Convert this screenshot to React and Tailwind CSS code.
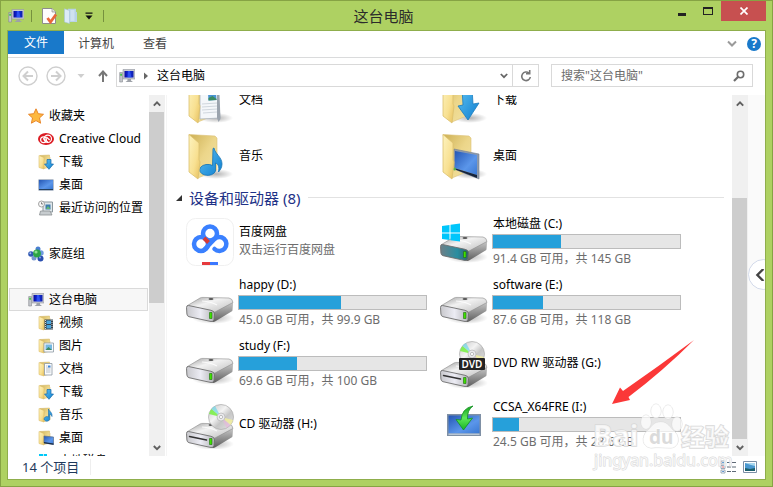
import React from 'react';

const quickLinks = [
  { label: '收藏夹', icon: 'star', level: 0 },
  { label: 'Creative Cloud', icon: 'cloud', level: 1 },
  { label: '下载', icon: 'download', level: 1 },
  { label: '桌面', icon: 'desktop', level: 1 },
  { label: '最近访问的位置', icon: 'recent', level: 1 },
];

const pcLinks = [
  { label: '这台电脑', icon: 'pc', level: 0, selected: true },
  { label: '视频', icon: 'video', level: 1 },
  { label: '图片', icon: 'picture', level: 1 },
  { label: '文档', icon: 'document', level: 1 },
  { label: '下载', icon: 'download', level: 1 },
  { label: '音乐', icon: 'music', level: 1 },
  { label: '桌面', icon: 'desktopFolder', level: 1 },
  { label: '本地磁盘 (C:)', icon: 'windows', level: 1 },
];

const folders = [
  { name: '文档', kind: 'document' },
  { name: '下载', kind: 'download' },
  { name: '音乐', kind: 'music' },
  { name: '桌面', kind: 'desktop' },
];

const devices = [
  { name: '百度网盘', icon: 'baidu', note: '双击运行百度网盘' },
  { name: '本地磁盘 (C:)', icon: 'system', used: 36.5, note: '91.4 GB 可用，共 145 GB' },
  { name: 'happy (D:)', icon: 'drive', used: 54.5, note: '45.0 GB 可用，共 99.9 GB' },
  { name: 'software (E:)', icon: 'drive', used: 26.5, note: '87.6 GB 可用，共 118 GB' },
  { name: 'study (F:)', icon: 'drive', used: 31, note: '69.6 GB 可用，共 100 GB' },
  { name: 'DVD RW 驱动器 (G:)', icon: 'dvd' },
  { name: 'CD 驱动器 (H:)', icon: 'cd' },
  { name: 'CCSA_X64FRE (I:)', icon: 'image', used: 14, note: '24.5 GB 可用，共 28.6 GB' },
];

// Gradients shared by all the icons
function Gradients() {
  return (
    <svg className="absolute h-0 w-0" aria-hidden="true">
      <defs>
        <linearGradient id="flap" x1="0" y1="0" x2="1" y2="1">
          <stop offset="0" stopColor="#fdf3bf" />
          <stop offset="0.6" stopColor="#f8e091" />
          <stop offset="1" stopColor="#e6bf5c" />
        </linearGradient>
        <linearGradient id="folderBack" x1="0" y1="0" x2="1" y2="1">
          <stop offset="0" stopColor="#cdb054" />
          <stop offset="0.5" stopColor="#ecd68a" />
          <stop offset="1" stopColor="#f3e3a4" />
        </linearGradient>
        <linearGradient id="blue" x1="0" y1="0" x2="1" y2="1">
          <stop offset="0" stopColor="#5cc0f2" />
          <stop offset="1" stopColor="#0f7fd0" />
        </linearGradient>
        <linearGradient id="screen" x1="0" y1="0" x2="1" y2="1">
          <stop offset="0" stopColor="#2557b4" />
          <stop offset="0.6" stopColor="#5b96ea" />
          <stop offset="1" stopColor="#3a78d2" />
        </linearGradient>
        <linearGradient id="monitor" x1="0" y1="0" x2="1" y2="0">
          <stop offset="0" stopColor="#0a0a9c" />
          <stop offset="0.5" stopColor="#1233e6" />
          <stop offset="1" stopColor="#0f1ea8" />
        </linearGradient>
        <linearGradient id="driveTop" x1="0" y1="0" x2="1" y2="1">
          <stop offset="0" stopColor="#9b9b9b" />
          <stop offset="0.4" stopColor="#f2f2f2" />
          <stop offset="1" stopColor="#bdbdbd" />
        </linearGradient>
        <linearGradient id="driveSide" x1="0" y1="0" x2="0" y2="1">
          <stop offset="0" stopColor="#c9c9c9" />
          <stop offset="1" stopColor="#5d5d5d" />
        </linearGradient>
        <linearGradient id="driveFront" x1="0" y1="0" x2="1" y2="0">
          <stop offset="0" stopColor="#c8c8cc" />
          <stop offset="0.5" stopColor="#ececf4" />
          <stop offset="1" stopColor="#b4b4b8" />
        </linearGradient>
        <linearGradient id="teal" x1="0" y1="0" x2="1" y2="0">
          <stop offset="0" stopColor="#6d8088" />
          <stop offset="0.6" stopColor="#2a8ea0" />
          <stop offset="1" stopColor="#34606e" />
        </linearGradient>
        <linearGradient id="disc" x1="0" y1="0" x2="1" y2="1">
          <stop offset="0" stopColor="#c4c4c4" />
          <stop offset="0.4" stopColor="#f3f3f3" />
          <stop offset="0.6" stopColor="#c6c6c6" />
          <stop offset="1" stopColor="#e6e6e6" />
        </linearGradient>
        <linearGradient id="green" x1="0" y1="0" x2="0" y2="1">
          <stop offset="0" stopColor="#14a01c" />
          <stop offset="0.5" stopColor="#5ee85a" />
          <stop offset="1" stopColor="#17b424" />
        </linearGradient>
        <radialGradient id="shadow">
          <stop offset="0" stopColor="#000" stopOpacity="0.3" />
          <stop offset="1" stopColor="#000" stopOpacity="0" />
        </radialGradient>
      </defs>
    </svg>
  );
}

function SmallFolder({ children }) {
  return (
    <>
      <path d="M2 1.5 11.500 1v2l.5.5V13l-6 1.500z" fill="url(#folderBack)" stroke="#d3b561" strokeWidth=".5" />
      <path d="M1 1.500 6 3.500v11.500L1 13.500z" fill="url(#flap)" stroke="#dcbc66" strokeWidth=".6" />
      {children}
    </>
  );
}

const smallIcons = {
  star: (
    <path
      d="m8 .8 2.200 4.900 5.300.6-4 3.600 1.100 5.300L8 12.600l-4.600 2.600 1.100-5.300-4-3.600 5.300-.6z"
      fill="#fdb940"
      stroke="#e8862a"
      strokeWidth="1"
      strokeLinejoin="round"
    />
  ),
  cloud: (
    <>
      <ellipse cx="8" cy="8" rx="8" ry="6" fill="#dc1c24" />
      <g fill="none" stroke="#fff" strokeWidth="1.200">
        <circle cx="5.500" cy="8.800" r="2.900" />
        <circle cx="9.800" cy="7.800" r="3.700" />
        <path d="m5 7.600 2.400 1.500L9.800 11M8.300 6l3.400 3" />
      </g>
    </>
  ),
  download: (
    <SmallFolder>
      <path d="M9 5.500h4V10h2.500L11 15.300 6.500 10H9z" fill="url(#blue)" stroke="#1769a8" strokeWidth=".7" />
    </SmallFolder>
  ),
  desktop: (
    <>
      <rect x=".5" y="2.500" width="15" height="11" fill="#6b7f99" />
      <rect x="1" y="3" width="14" height="9" fill="url(#screen)" />
      <path d="M1 12h14v1H1z" fill="#24405f" />
    </>
  ),
  recent: (
    <>
      <path d="M5 2h9.500v10H5z" fill="#dfe6ea" stroke="#8b979d" />
      <path d="M7.500 4.500h5v5h-5z" fill="#3c7cae" />
      <path d="m8 9 2-3 2.500 3z" fill="#64b871" />
      <path d="M2.500 11H12l2 4H1.500z" fill="#c7cccf" stroke="#8a8f92" strokeWidth=".8" />
      <circle cx="3.500" cy="4" r="3" fill="#f6f6f6" stroke="#9a9a9a" strokeWidth=".9" />
      <path d="M3.500 2.300V4H5" fill="none" stroke="#555" strokeWidth=".7" />
    </>
  ),
  homegroup: (
    <>
      <circle cx="10" cy="3" r="2.500" fill="#4a7fd2" />
      <circle cx="3" cy="8" r="2.800" fill="#3158b2" />
      <circle cx="13" cy="7" r="2.700" fill="#6f9be0" />
      <circle cx="12.500" cy="12.500" r="3" fill="#2a4fb0" />
      <circle cx="6" cy="12" r="2.500" fill="#7796cf" />
      <circle cx="9" cy="7.500" r="3.900" fill="#2da544" />
      <circle cx="8" cy="6" r="1.600" fill="#8fe08f" />
      <circle cx="2.300" cy="7.200" r="1" fill="#9db9ec" />
      <circle cx="12" cy="11.500" r="1" fill="#86a4e6" />
    </>
  ),
  pc: (
    <>
      <path d="M4 1.500h12v9.500H4z" fill="#c9ccd2" stroke="#9296a0" strokeWidth=".6" />
      <path d="M5.500 3h9v6.500h-9z" fill="url(#monitor)" />
      <path d="m9 3-.5 6.500h4L11 3z" fill="#3f66ff" opacity=".6" />
      <path d="M8.500 11h3.500v1.500l2 1.500H6.500l2-1.500z" fill="#9da1a8" />
      <path d="M.7 4.500h2.800V14H.7z" fill="#c3c6ca" stroke="#868a91" strokeWidth=".6" />
      <path d="M1.300 5.800h1.600v2H1.300z" fill="#37c637" />
    </>
  ),
  video: (
    <SmallFolder>
      <path d="M6.500 4.500H15v10H6.500z" fill="#35424d" />
      <path d="M8.500 5.500h4.500v3.500H8.500zM8.500 10h4.500v3.500H8.500z" fill="#4aa6de" />
      <path d="M7.500 5v9M14 5v9" stroke="#dfe6ea" strokeDasharray="1 1" strokeWidth=".9" />
    </SmallFolder>
  ),
  picture: (
    <SmallFolder>
      <path d="M6 5h9.500v9H6z" fill="#f8fafb" stroke="#8e9ba5" strokeWidth=".8" />
      <path d="M7.500 6.500H14v5.500H7.500z" fill="#74b8e2" />
      <path d="m7.500 12 3-3 3.500 3z" fill="#3e8b63" />
    </SmallFolder>
  ),
  document: (
    <SmallFolder>
      <path d="M6.500 2.500H14V14H6.500z" fill="#fafcfd" stroke="#8e98a2" strokeWidth=".8" />
      <path d="M8 5h1.500M8 7h4.500M8 9h4.500M8 11h4.500" stroke="#a6b0bb" strokeWidth=".8" />
      <path d="M10 4.500h2.500v2H10z" fill="#3f86d8" />
    </SmallFolder>
  ),
  music: (
    <SmallFolder>
      <path
        d="M10.500 2c.5 2.500 4 3 3.500 7.500-.5-1.500-1.500-2-2.300-2.200v4.500a2.800 2.300 0 1 1-1.200-1.800z"
        fill="url(#blue)"
        stroke="#1769a8"
        strokeWidth=".6"
      />
    </SmallFolder>
  ),
  desktopFolder: (
    <SmallFolder>
      <path d="m6 6 9.500 1v7.500L6 13z" fill="url(#screen)" stroke="#5b6f89" strokeWidth=".7" />
      <path d="m6 12 9.500 1.500v1.300L6 13.300z" fill="#1c2c44" />
    </SmallFolder>
  ),
  windows: <path d="M1 1h4v4H1zM5.700 1H9v4H5.700z" fill="#00c8f8" />,
};

function SmallIcon({ name }) {
  return (
    <svg viewBox="0 0 16 16" className="h-4 w-4 shrink-0" aria-hidden="true">
      {smallIcons[name]}
    </svg>
  );
}

const folderContents = {
  document: (
    <>
      <path d="m14 8 17-4 3 38-20 1z" fill="#f4f7fa" stroke="#aab3bd" strokeWidth=".8" />
      <path d="m22 17 8-1 .5 8-8 .5z" fill="#4a94d2" />
      <path d="m22.500 22 4-2 4 3v1l-8 .5z" fill="#3c8c62" />
      <path d="m16 28 15-1M16 31l15-1M16 34l15-1M17 37l14-1" stroke="#d0d7de" strokeWidth="1" />
      <path d="m31 4 2 3 1.500 36-2 3-1.500-4z" fill="#9ba4ae" />
    </>
  ),
  download: (
    <path d="M22 12h10l1 16 6-1-11 17-10-14 5-1z" fill="url(#blue)" stroke="#1c7cbd" strokeWidth=".8" />
  ),
  music: (
    <path
      d="M28 16c1 6 8 9 8 16 0 4-2 6-3.500 8 1-6-.5-8-3-9v8a8 5.500 0 1 1-3-5.500l.5-17z"
      fill="url(#blue)"
      stroke="#1673b3"
      strokeWidth=".8"
    />
  ),
  desktop: (
    <>
      <path d="m14 17 25 5v25l-25-10z" fill="#8d9aab" stroke="#75808e" strokeWidth=".6" />
      <path d="m15 19 22 4v20l-22-7z" fill="url(#screen)" />
      <path d="m14 36 23 7v3l-23-9z" fill="#15243c" />
      <circle cx="14.500" cy="37" r="1.500" fill="#58b44c" />
    </>
  ),
};

function FolderIcon({ kind }) {
  return (
    <svg viewBox="0 0 48 48" className="h-12 w-12 shrink-0" aria-hidden="true">
      <ellipse cx="30" cy="42" rx="17" ry="5" fill="url(#shadow)" />
      <path d="M3 2.500 29 4l2 2v32l-19 8z" fill="url(#folderBack)" stroke="#dbc177" strokeWidth=".6" />
      {folderContents[kind]}
      <path d="M3 2.500 13 11v17l1 2-2 17-9-7z" fill="url(#flap)" stroke="#dcc06e" strokeWidth=".8" />
    </svg>
  );
}

function DriveBody({ front = 'url(#driveFront)', slot }) {
  return (
    <>
      <ellipse cx="27" cy="39" rx="21" ry="6" fill="url(#shadow)" />
      <path d="M28 31.500 46 23q1.500 0 1 2l-.5 6q0 1-1 1.500L29 42.500q-2 1-3-.5z" fill="url(#driveSide)" />
      <path
        d="M1.500 26.500 14 19q1-.7 3-.6l26 .6q3.500.6 4 4.500L29 33q-1 .5-2.500.3L3 28.500z"
        fill="url(#driveTop)"
        stroke="#8c8c8c"
        strokeWidth=".6"
      />
      <path
        d="M2.500 26.500 25 31.300q3.500.7 3.500 3.500l-.5 5.700q-.4 2.500-3 2L3 37.700Q1 37 .9 35l-.4-6.500q0-2.300 2-2z"
        fill={front}
        stroke="#6e6e6e"
        strokeWidth=".9"
      />
      {slot && <path d="m3.500 31.500 17 3.600" stroke="#333" strokeWidth="1.500" strokeLinecap="round" />}
      <path d="M16 22q9 .5 15 4" fill="none" stroke="#fff" strokeWidth="1.200" opacity=".8" />
      <ellipse cx="25" cy="20" rx="2.500" ry="1" fill="#555" />
      <path d="M23.500 33.500h2.500v6h-2.500z" fill="#3fe000" stroke="#1e6b10" strokeWidth=".6" />
    </>
  );
}

function Disc({ cx, cy }) {
  return (
    <g transform={`translate(${cx} ${cy})`}>
      <circle r="12.500" fill="url(#disc)" stroke="#a9a9a9" strokeWidth=".7" />
      <path d="m0 0-12-3q.8-3 2.500-5z" fill="#7cf04a" opacity=".9" />
      <path d="m0 0-9.500-8q1.500-2 3.500-3z" fill="#71d9e8" opacity=".7" />
      <path d="m0 0 12 3q-.8 3-2.500 5z" fill="#f3f09a" opacity=".8" />
      <path d="m0 0 9.500 8q-2 2-4 3z" fill="#e8b4dc" opacity=".6" />
      <circle r="4" fill="#e9e9ec" stroke="#b5b5b5" strokeWidth=".7" />
      <circle r="1.600" fill="#fff" stroke="#999" strokeWidth=".6" />
    </g>
  );
}

const deviceIcons = {
  drive: <DriveBody />,
  system: (
    <>
      <DriveBody front="url(#teal)" />
      <path d="m2 8 7.500-1v7.500H2zM10.500 6.800 20 5.500v9h-9.500zM2 15.500h7.500V22L2 21zM10.500 15.500H20v8l-9.500-1.300z" fill="#00c6fb" />
    </>
  ),
  cd: (
    <>
      <g transform="translate(0 4)">
        <DriveBody slot />
      </g>
      <Disc cx={35} cy={16} />
    </>
  ),
  dvd: (
    <>
      <g transform="translate(0 4)">
        <DriveBody slot />
      </g>
      <Disc cx={32} cy={14} />
      <rect x="19" y="18" width="26" height="12" rx="1" fill="#232323" />
      <text x="32" y="27.500" textAnchor="middle" fontSize="10" fontWeight="600" fill="#fff">
        DVD
      </text>
    </>
  ),
  image: (
    <>
      <path d="M7 13h34v22H7z" fill="#7f90a5" />
      <path d="M8.500 14.500h31v18h-31z" fill="url(#screen)" />
      <path d="M8.500 32.500h31V34h-31z" fill="#b9c6d4" />
      <path
        d="M33 5q-6 4-5.500 13l5-1L23.500 29 16 18.500l5 .5Q22 7 33 5z"
        fill="url(#green)"
        stroke="#129022"
        strokeWidth=".8"
        strokeLinejoin="round"
      />
    </>
  ),
  baidu: (
    <>
      <rect x=".5" y=".5" width="47" height="47" rx="9" fill="#fff" stroke="#f0f0f0" />
      <g fill="none" stroke="#3a80ff" strokeWidth="4.500">
        <circle cx="24" cy="15.500" r="7" />
        <circle cx="15" cy="26" r="7" />
        <path d="M18.500 31.500 28 21.500a7 7 0 1 1 .5 9.500" strokeLinecap="round" />
      </g>
      <path d="m18 20 4.500 4.500" stroke="#d83a34" strokeWidth="4" />
      <path d="M16 44h8v3h-8z" fill="#e6393d" />
      <path d="M24 44h8v3h-8z" fill="#3b78ff" />
    </>
  ),
};

function Chevron({ className, direction = 'down', width = 2 }) {
  const paths = {
    down: 'M1 2.500 5 6.500 9 2.500',
    up: 'M1 7 5 3 9 7',
    left: 'M7 0 2 5 7 10',
  };
  return (
    <svg viewBox="0 0 10 10" className={className} fill="none" stroke="currentColor" strokeWidth={width} aria-hidden="true">
      <path d={paths[direction]} />
    </svg>
  );
}

function Scrollbar({ label, start, size }) {
  return (
    <div className="flex w-4 shrink-0 flex-col bg-[#f0f0f0] text-[#606060]" aria-label={label}>
      <button className="flex h-[17px] items-center justify-center" aria-label="向上滚动">
        <Chevron direction="up" className="h-2 w-2" width={2.4} />
      </button>
      <div className="flex min-h-0 flex-1 flex-col">
        <div style={{ height: `${start}%` }} />
        <div className="mr-px bg-[#cdcdcd]" style={{ height: `${size}%` }} />
      </div>
      <button className="flex h-[17px] items-center justify-center" aria-label="向下滚动">
        <Chevron className="h-2 w-2" width={2.4} />
      </button>
    </div>
  );
}

function TitleBar() {
  return (
    <header className="flex h-[29px] shrink-0 items-center pr-[6px]">
      <div className="flex flex-1 items-center">
        <span className="ml-[7px]">
          <SmallIcon name="pc" />
        </span>
        <span className="ml-[7px] h-3 w-px bg-[#76913e]" />
        <button className="ml-[10px]" aria-label="属性">
          <svg viewBox="0 0 16 16" className="h-4 w-4">
            <path d="M.5.5H10L13.500 4v11.500H.5z" fill="#fdfdfd" stroke="#8d8d8d" />
            <path d="M10 .5V4h3.500" fill="#e2e2e2" stroke="#8d8d8d" strokeWidth=".7" />
            <path d="m5.500 10 3 4L14 6.500" fill="none" stroke="#e8683a" strokeWidth="2.800" />
          </svg>
        </button>
        <button className="ml-[6px]" aria-label="新建文件夹">
          <svg viewBox="0 0 16 16" className="h-4 w-4">
            <path d="M4 .8h8v3l1 .5V14H4z" fill="#b9d3e6" />
            <path d="m.5.8 5 1.700V15.500l-5-1.500z" fill="#dcebf6" stroke="#a7c5dc" strokeWidth=".6" />
            <path d="M6.500 2h4v11h-4z" fill="#cfe1ef" />
          </svg>
        </button>
        <button className="ml-[5px]" aria-label="自定义快速访问工具栏">
          <svg viewBox="0 0 8 8" className="h-2 w-2">
            <path d="M.5.500h7v1.300h-7zM.5 3.500h7L4 7.500z" fill="#111" />
          </svg>
        </button>
        <span className="ml-[10px] h-3 w-px bg-[#76913e]" />
      </div>
      <h1 className="text-[15px] leading-5 text-[#2b2b2b]">这台电脑</h1>
      <div className="flex flex-1 items-start justify-end self-stretch">
        <button className="flex h-5 w-[26px] items-center justify-center" aria-label="最小化">
          <span className="mt-[6px] h-[3px] w-2 bg-[#222]" />
        </button>
        <button className="flex h-5 w-[26px] items-center justify-center" aria-label="最大化">
          <span className="h-2 w-[10px] border border-t-2 border-[#222]" />
        </button>
        <button className="flex h-5 w-[45px] items-center justify-center bg-[#c75050]" aria-label="关闭">
          <svg viewBox="0 0 8 8" className="h-2 w-2">
            <path d="m.5.5 7 7m0-7-7 7" stroke="#fff" strokeWidth="1.700" />
          </svg>
        </button>
      </div>
    </header>
  );
}

function Ribbon() {
  return (
    <nav className="flex h-[27px] shrink-0 items-start border-b border-[#dadbdc] text-[#444]">
      <button className="h-[23px] w-14 bg-[#1979ca] text-white">文件</button>
      <button className="ml-[14px] h-[26px]">计算机</button>
      <button className="ml-[29px] h-[26px]">查看</button>
      <div className="ml-auto flex h-[26px] items-center pr-1">
        <button aria-label="展开功能区">
          <Chevron className="h-[10px] w-[10px] text-[#9a9a9a]" width={2} />
        </button>
        <button
          className="ml-[10px] flex h-[14px] w-[14px] items-center justify-center rounded-full bg-[#1979ca] font-bold text-white"
          aria-label="帮助"
        >
          ?
        </button>
      </div>
    </nav>
  );
}

function AddressRow() {
  return (
    <div className="flex h-[37px] shrink-0 items-center pr-3 pb-[2px] pl-[10px]">
      <button aria-label="后退">
        <svg viewBox="0 0 20 20" className="h-5 w-5" fill="none" stroke="#cfcfcf">
          <circle cx="10" cy="10" r="9" strokeWidth="1.400" />
          <path d="M15 10H6m4-4.500L5.500 10l4.500 4.500" strokeWidth="2" />
        </svg>
      </button>
      <button className="ml-2" aria-label="前进">
        <svg viewBox="0 0 20 20" className="h-5 w-5" fill="none" stroke="#cfcfcf">
          <circle cx="10" cy="10" r="9" strokeWidth="1.400" />
          <path d="M5 10h9m-4-4.500 4.500 4.500-4.500 4.500" strokeWidth="2" />
        </svg>
      </button>
      <button className="ml-[11px]" aria-label="最近浏览的位置">
        <svg viewBox="0 0 8 8" className="h-2 w-2">
          <path d="M.5 2h7L4 6z" fill="#cfcfcf" />
        </svg>
      </button>
      <button className="ml-[12px]" aria-label="上移">
        <svg viewBox="0 0 12 12" className="h-3 w-3" fill="none" stroke="#777" strokeWidth="2">
          <path d="M6 12V2M2 6l4-4.500L10 6" />
        </svg>
      </button>
      <div className="ml-[7px] flex h-[23px] flex-1 items-stretch border border-[#d9d9d9]">
        <div className="flex flex-1 items-center pl-[2px]">
          <SmallIcon name="pc" />
          <svg viewBox="0 0 8 8" className="ml-[7px] h-2 w-2" aria-hidden="true">
            <path d="m2 .5 4 3.500-4 3.500z" fill="#666" />
          </svg>
          <button className="ml-[7px] leading-4">这台电脑</button>
        </div>
        <button className="flex w-[17px] items-center justify-center text-[#666]" aria-label="以前的位置">
          <Chevron className="h-2 w-2" width={2.2} />
        </button>
        <button className="flex w-[26px] items-center justify-center border-l border-[#d9d9d9]" aria-label="刷新">
          <svg viewBox="0 0 12 12" className="h-3 w-3" fill="none" stroke="#777" strokeWidth="1.600">
            <path d="M9 3.200A4.300 4.300 0 1 0 10.300 7" />
            <path d="M6 3.700h3.700V0" />
          </svg>
        </button>
      </div>
      <label className="ml-3 flex h-[23px] w-[202px] items-center border border-[#d9d9d9] pr-[7px] pl-[9px]">
        <input
          type="text"
          aria-label="搜索"
          placeholder={'搜索"这台电脑"'}
          className="min-w-0 flex-1 outline-none placeholder:text-[#6d6d6d]"
        />
        <svg viewBox="0 0 12 12" className="h-3 w-3" fill="none" stroke="#6d6d6d" aria-hidden="true">
          <circle cx="7.500" cy="4.500" r="3.200" strokeWidth="1.600" />
          <path d="M5.200 6.800 1 11" strokeWidth="2.200" />
        </svg>
      </label>
    </div>
  );
}

function TreeItem({ item }) {
  return (
    <li>
      <a
        href="#"
        className={`mx-px flex h-[23px] items-center border whitespace-nowrap ${
          item.level === 0 ? 'pl-[18px]' : 'pl-7'
        } ${item.selected ? 'border-[#dadada] bg-[#f7f7f7]' : 'border-transparent'}`}
      >
        <SmallIcon name={item.icon} />
        <span className="ml-[5px]">{item.label}</span>
      </a>
    </li>
  );
}

function Sidebar() {
  return (
    <aside className="flex w-[157px] shrink-0 overflow-hidden">
      <div className="min-w-0 flex-1 pt-[9px]">
        <ul>
          {quickLinks.map((item) => (
            <TreeItem key={item.label} item={item} />
          ))}
        </ul>
        <ul className="py-[23px]">
          <TreeItem item={{ label: '家庭组', icon: 'homegroup', level: 0 }} />
        </ul>
        <ul>
          {pcLinks.map((item) => (
            <TreeItem key={item.label} item={item} />
          ))}
        </ul>
      </div>
      <Scrollbar label="导航窗格滚动条" start={0} size={58.4} />
    </aside>
  );
}

function DeviceTile({ device }) {
  return (
    <li className="flex h-[61px] items-center gap-1">
      <svg viewBox="0 0 48 48" className="h-12 w-12 shrink-0" aria-hidden="true">
        {deviceIcons[device.icon]}
      </svg>
      <div className="w-[189px] pb-px leading-4">
        <p className="pl-px">{device.name}</p>
        {device.used && (
          <div
            className="mt-[2px] h-[15px] border border-[#bcbcbc] bg-[#e6e6e6]"
            role="progressbar"
            aria-label={device.name}
            aria-valuenow={device.used}
          >
            <div className="h-full bg-[#26a0da]" style={{ width: `${device.used}%` }} />
          </div>
        )}
        {device.note && <p className="mt-[2px] pl-px text-[#6d6d6d]">{device.note}</p>}
      </div>
    </li>
  );
}

function FileList() {
  return (
    <main className="ml-px min-w-0 flex-1 overflow-hidden border-l border-[#f5f5f5] pl-[19px]">
      {/* the list is scrolled, its first row is partly out of view */}
      <ul className="-mt-[23px] grid grid-cols-[repeat(auto-fill,254px)]">
        {folders.map((folder) => (
          <li key={folder.name} className="flex h-14 items-center gap-[5px]">
            <FolderIcon kind={folder.kind} />
            <span>{folder.name}</span>
          </li>
        ))}
      </ul>
      <div className="-ml-[11px] flex h-[27px] items-center pr-2">
        <svg viewBox="0 0 8 8" className="h-2 w-2" aria-hidden="true">
          <path d="M7 1v6H1z" fill="#333" />
        </svg>
        <h2 className="ml-[6px] text-[15px] leading-5 text-[#1e3287]">设备和驱动器 (8)</h2>
        <span className="ml-2 h-px flex-1 bg-[#e2e2e2]" />
      </div>
      <ul className="grid grid-cols-[repeat(auto-fill,254px)]">
        {devices.map((device) => (
          <DeviceTile key={device.name} device={device} />
        ))}
      </ul>
    </main>
  );
}

function StatusBar() {
  return (
    <footer className="flex h-[23px] shrink-0 items-center pr-2 pb-[2px] pl-[14px]">
      <span className="border-r border-[#eee] pr-[11px] text-[13px] leading-4 text-[#1e395b]">14 个项目</span>
      <button className="ml-auto" aria-label="详细信息">
        <svg viewBox="0 0 16 14" className="h-[14px] w-4">
          <path d="M1 1h4v3H1zM1 5.500h4v3H1zM1 10h4v3H1z" fill="#fff" stroke="#8797a8" strokeWidth=".8" />
          <path d="M2.300 2h1.500v1H2.300zM2.300 11h1.500v1H2.300z" fill="#3779c4" />
          <path d="M2.300 6.500h1.500v1H2.300z" fill="#d33" />
          <path d="M7 2.500h4m1 0h4M7 7h4m1 0h4M7 11.500h4m1 0h4" stroke="#5e6a77" strokeWidth="1.200" />
        </svg>
      </button>
      <button className="ml-[7px]" aria-label="大图标">
        <svg viewBox="0 0 14 12" className="h-3 w-[14px]">
          <path d="M.5.5h13v11H.5z" fill="#fff" stroke="#7b8fa6" />
          <path d="M2 2h10v8H2z" fill="#4a98d0" />
          <path d="M2 2h10v3L8 4z" fill="#a9d8ef" />
          <path d="m2 7 5 1 5-1v3H2z" fill="#1c5f6c" />
        </svg>
      </button>
    </footer>
  );
}

// Red pointer and watermark laid over the window
function Annotations() {
  return (
    <svg
      viewBox="-2 -1 173 157"
      className="pointer-events-none absolute right-0 bottom-0 h-[157px] w-[193px]"
      preserveAspectRatio="xMaxYMax meet"
      overflow="visible"
      aria-hidden="true"
    >
      <path d="M11 74 19 57.500 22 61Q58 36 93 10 62 41 27.500 67l1.500 3z" fill="#fb3838" />
      <g fill="#fff" fillOpacity=".7" stroke="#d8d8d8" strokeWidth=".8" paintOrder="stroke">
        <text x="-8" y="116" fontSize="29" fontWeight="700" strokeWidth="1.500">
          Bai
        </text>
        <ellipse cx="45" cy="92" rx="5" ry="7" />
        <ellipse cx="55" cy="81" rx="5" ry="7" />
        <ellipse cx="67" cy="82" rx="5" ry="7" />
        <ellipse cx="76" cy="94" rx="5" ry="7" />
        <path d="M60 92c7 0 9 6 13 9 6 5 6 16-3 17-7 0-13-1-20 0-9-1-10-11-4-17 5-4 6-9 14-9z" />
        <text x="48" y="114" fontSize="19" fontWeight="700" fill="#ccc" stroke="#fff">
          du
        </text>
        <text x="80" y="116" fontSize="24" fontWeight="700" strokeWidth="1.500">
          经验
        </text>
        <text x="-7" y="136" fontSize="16" strokeWidth="1">
          jingyan.baidu.com
        </text>
      </g>
    </svg>
  );
}

export default function App() {
  return (
    <div className="relative flex h-screen w-full flex-col overflow-hidden border border-[#86a344] bg-[#aed162] font-['Noto_Sans','Noto_Sans_CJK_SC',sans-serif] text-xs text-black">
      <Gradients />
      <TitleBar />
      <div className="mx-[6px] mb-[6px] flex min-h-0 flex-1 flex-col border border-[#8fae4c] bg-white">
        <Ribbon />
        <AddressRow />
        <div className="flex min-h-0 flex-1">
          <Sidebar />
          <FileList />
          <Scrollbar label="文件列表滚动条" start={26.3} size={73.7} />
          <div className="flex w-[17px] shrink-0 items-center overflow-hidden bg-[#fafafa] pb-[2px]">
            <button
              className="flex h-[31px] w-[31px] shrink-0 items-center rounded-full border border-[#d3daea] bg-white pl-[6px] text-[#444]"
              aria-label="展开窗格"
            >
              <Chevron direction="left" className="h-3 w-3" width={2} />
            </button>
          </div>
        </div>
        <StatusBar />
      </div>
      <Annotations />
    </div>
  );
}
